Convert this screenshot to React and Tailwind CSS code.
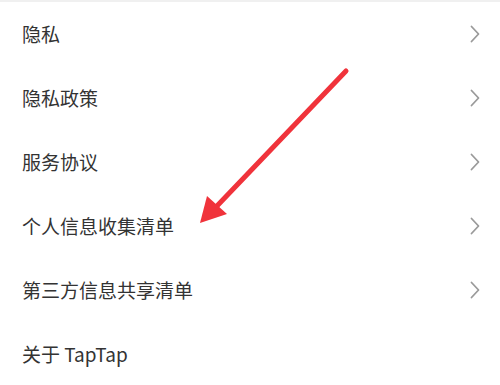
const items = [
  { label: "隐私", arrow: true },
  { label: "隐私政策", arrow: true },
  { label: "服务协议", arrow: true },
  { label: "个人信息收集清单", arrow: true },
  { label: "第三方信息共享清单", arrow: true },
  { label: "关于 TapTap", arrow: false },
];

function Chevron() {
  return (
    <svg width="10" height="18" viewBox="0 0 10 18" fill="none">
      <path
        d="M1.5 1.5 L8.5 9 L1.5 16.5"
        stroke="#9a9a9a"
        strokeWidth="1.8"
        strokeLinecap="round"
        strokeLinejoin="round"
      />
    </svg>
  );
}

export default function App() {
  return (
    <div
      className="relative h-[385px] w-[500px] overflow-hidden bg-white"
      style={{ fontFamily: '"Noto Sans CJK SC", "Noto Sans", sans-serif' }}
    >
      <div className="h-[2px] bg-[#f0f0f0]" />
      <ul className="flex flex-col">
        {items.map((item) => (
          <li
            key={item.label}
            className="flex h-[64px] items-center justify-between pl-[22px] pr-[20px]"
          >
            <span className="text-[19px] text-[#333333]">{item.label}</span>
            {item.arrow && <Chevron />}
          </li>
        ))}
      </ul>

      {/* red annotation arrow */}
      <svg
        className="pointer-events-none absolute left-0 top-0"
        width="500"
        height="385"
        viewBox="0 0 500 385"
      >
        <line
          x1="346"
          y1="71"
          x2="216"
          y2="207"
          stroke="#f0333b"
          strokeWidth="5"
          strokeLinecap="round"
        />
        <polygon points="200,223 207,196 227,214" fill="#f0333b" />
      </svg>
    </div>
  );
}
